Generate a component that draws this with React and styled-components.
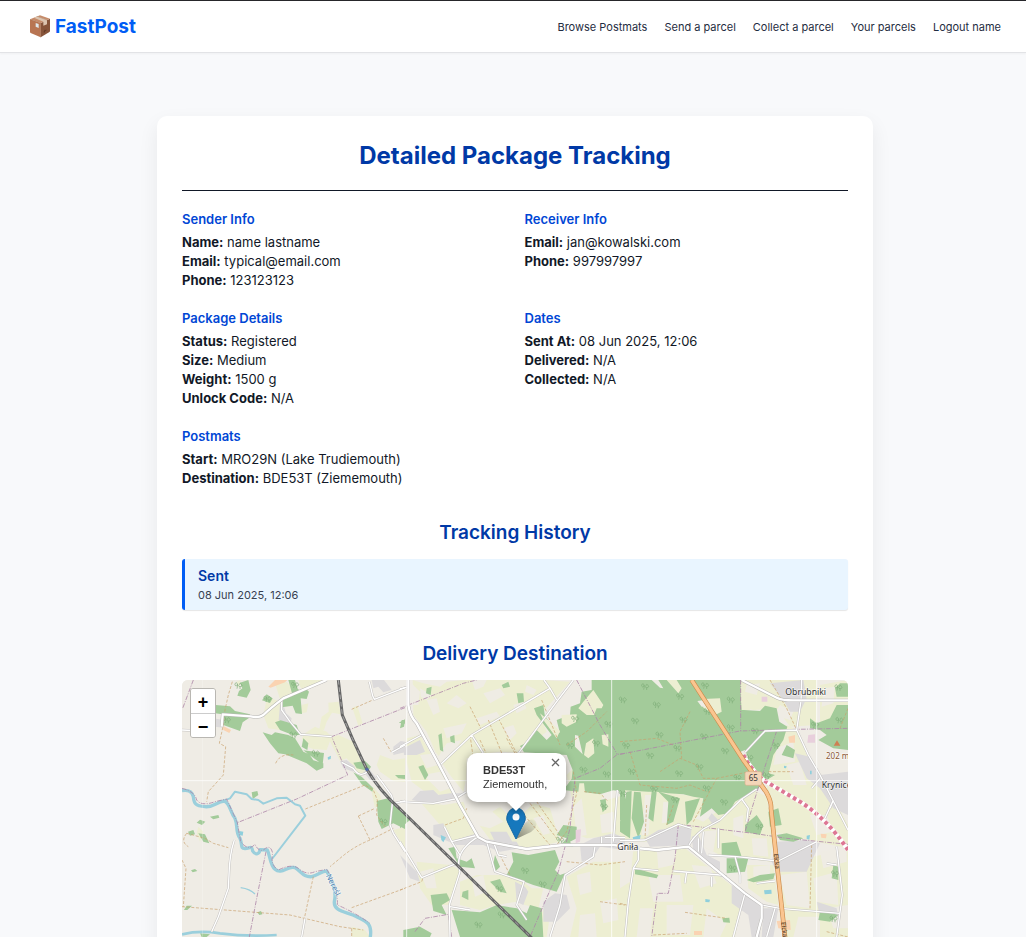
import React from "react";
import styled, { createGlobalStyle } from "styled-components";

const GlobalStyle = createGlobalStyle`
  *, *::before, *::after { box-sizing: border-box; }
  body {
    margin: 0;
    background: #f8f9fb;
    color: #111827;
    font-family: Inter, "Liberation Sans", sans-serif;
    font-size: 13px;
    line-height: 19px;
  }
  h1, h2, h3, p, dl, dt, dd, ul { margin: 0; padding: 0; }
`;

const Header = styled.header`
  display: flex;
  align-items: center;
  justify-content: space-between;
  height: 53px;
  padding: 0 25px 0 29px;
  background: #fff;
  border-top: 1px solid #26262a;
  border-bottom: 1px solid #e2e3e6;
  box-shadow: 0 1px 2px rgba(0, 0, 0, 0.04);
`;

const Brand = styled.a`
  display: flex;
  align-items: center;
  gap: 4px;
  color: #005df5;
  font-size: 19px;
  font-weight: 700;
  line-height: 26px;
  text-decoration: none;
`;

const Nav = styled.nav`
  display: flex;
  gap: 17px;
`;

const NavLink = styled.a`
  color: #1f2d42;
  font-size: 11px;
  line-height: 16px;
  text-decoration: none;
`;

const Main = styled.main`
  padding: 63px 20px 64px 24px;
`;

const Card = styled.article`
  max-width: 716px;
  margin: 0 auto;
  padding: 25px;
  background: #fff;
  border-radius: 10px;
  box-shadow: 0 8px 20px rgba(0, 0, 0, 0.07);
`;

const Title = styled.h1`
  padding-bottom: 19px;
  border-bottom: 1px solid #111827;
  color: #0039a6;
  font-size: 24px;
  font-weight: 700;
  line-height: 30px;
  text-align: center;
`;

const InfoGrid = styled.div`
  display: grid;
  grid-template-columns: 1fr 1fr;
  gap: 19px;
  margin: 19px 0 30px;
`;

const InfoTitle = styled.h3`
  margin-bottom: 4px;
  color: #0046d5;
  font-size: 13px;
  font-weight: 600;
`;

const InfoLine = styled.p`
  strong { font-weight: 700; }
`;

const SectionTitle = styled.h2`
  margin-bottom: 11px;
  color: #0039a6;
  font-size: 19px;
  font-weight: 600;
  line-height: 30px;
  text-align: center;
`;

const History = styled.ul`
  margin-bottom: 29px;
  list-style: none;
`;

const HistoryItem = styled.li`
  padding: 7px 13px 6px;
  background: #e9f5ff;
  border-left: 3px solid #005df5;
  border-radius: 3px;
  box-shadow: 0 1px 1px rgba(0, 0, 0, 0.1);
`;

const EventName = styled.p`
  color: #0039a6;
  font-size: 14px;
  font-weight: 600;
  line-height: 20px;
`;

const EventTime = styled.p`
  color: #374151;
  font-size: 11px;
  line-height: 18px;
`;

const MapFrame = styled.div`
  position: relative;
  height: 320px;
  overflow: hidden;
  border-radius: 6px;
  background: #efede6;
`;

const MapCanvas = styled.svg`
  display: block;
  width: 100%;
  height: 100%;
`;

const ZoomControl = styled.div`
  position: absolute;
  top: 8px;
  left: 8px;
  display: flex;
  flex-direction: column;
  border: 1px solid #b9b7b2;
  border-radius: 3px;
  overflow: hidden;
`;

const ZoomButton = styled.button`
  width: 24px;
  height: 24px;
  padding: 3px 0 0;
  border: 0;
  background: #fff;
  color: #000;
  font-family: "Liberation Sans", sans-serif;
  font-size: 18px;
  font-weight: 700;
  line-height: 21px;
  & + & { border-top: 1px solid #ccc; }
`;

const Popup = styled.div`
  position: absolute;
  left: 50%;
  top: 73px;
  width: 99px;
  padding: 10px 16px 11px;
  transform: translateX(-48px);
  border-radius: 10px;
  background: #fff;
  color: #333;
  font-family: "Liberation Sans", sans-serif;
  font-size: 11px;
  line-height: 14px;
  white-space: nowrap;
  filter: drop-shadow(0 2px 5px rgba(0, 0, 0, 0.4));
  &::after {
    content: "";
    position: absolute;
    top: 100%;
    left: 40px;
    border: 9px solid transparent;
    border-top-color: #fff;
    border-bottom: 0;
  }
`;

const PopupClose = styled.button`
  position: absolute;
  top: 0;
  right: 0;
  width: 19px;
  height: 19px;
  padding: 0;
  border: 0;
  background: none;
  line-height: 0;
`;

const Marker = styled.svg`
  position: absolute;
  left: 50%;
  top: 127px;
  width: 40px;
  height: 33px;
  transform: translateX(-9px);
`;

function BoxIcon() {
  return (
    <svg width="22" height="24" viewBox="0 0 66 72" aria-hidden="true">
      <path d="M3 13 35 24V67L5 54Q3 53 3 50Z" fill="#b87552" />
      <path d="M35 24 63 11V47Q63 50 60 52L35 67Z" fill="#87543a" />
      <path d="M3 13 33 1 63 11 35 24Z" fill="#c68b69" />
      <path d="M15 8 24 4 54 15V28L43 32V20Z" fill="#dcc4b0" />
      <path d="M24 4 54 15" stroke="#b99a84" strokeWidth="2" />
      <path d="M20 24 29 27V39L20 35Z" fill="#dfe7ea" />
      <path d="M44 50 53 45M46 53 48 44" stroke="#593321" strokeWidth="2" />
      <path d="M3 13 35 24V67" fill="none" stroke="#9c6344" strokeWidth="1" />
    </svg>
  );
}

/* The map is drawn in three side-by-side sheets, each with its own origin. */
const SHEETS = [
  {
    x: 0,
    farm: [
      "M262 65 300 80 310 130 300 165 265 160 250 120Z",
      "M285 25 320 20 345 50 300 72Z",
      "M355 15H425L410 30 370 45 360 35Z",
      "M365 90 385 85 380 112 365 115Z",
      "M445 83 476 80 482 118 456 113 440 140 432 165 418 163 425 125 446 110Z",
      "M365 190 375 175 405 155 440 170 455 185 440 225 400 222 380 215Z",
      "M445 190 475 180 520 200 555 290 540 300 500 250 480 258Z",
      "M517 98 532 92 548 145 535 152Z",
      "M600 240 640 255 675 250V320L640 318 600 290 590 270Z",
      "M580 335 600 360 605 375 585 400 575 350Z",
      "M515 755 555 765 570 786H515Z",
      "M640 465 675 455V520Z",
      "M55 455 70 470 60 500 50 475Z",
      "M170 20 182 15 176 40Z",
    ],
    town: [
      "M300 88 312 95 318 115 335 130 330 150 296 135Z",
      "M480 258 500 255 525 275 520 290 490 280Z",
      "M575 15H612L635 45 610 52 595 35 580 40Z",
      "M100 130 130 135 130 158 105 155Z",
      "M640 215 662 198 675 200V232L640 240Z",
      "M550 290 570 285 590 310 570 315Z",
    ],
    peach: ["M265 35 285 15H322L315 22 272 38Z", "M130 153 153 165 148 174 130 165Z"],
    forest: [
      "M180 23 205 15 212 45 200 68 172 62 177 48 187 40Z",
      "M246 76 260 58 278 70 270 84Z",
      "M325 15 345 15 352 40 360 48 366 117 347 115 338 92 305 97 308 75 338 62Z",
      "M358 55 376 40 387 50 380 72 362 70Z",
      "M30 92 107 90 150 94 165 108 210 118 208 128 188 142 180 168 130 150 128 118 30 105Z",
      "M285 142 302 136 350 150 360 180 338 180 300 165Z",
      "M248 172 275 180 285 172 325 180 345 190 370 230 388 238 400 256 430 265 430 278 410 287 380 265 315 238 295 235 270 205Z",
      "M370 226 432 234 428 268 410 256Z",
      "M370 190 385 205 382 225 365 215Z",
      "M590 378 630 368 675 418V462L640 445 605 462 595 440Z",
      "M520 263 555 258 573 275 565 288 530 280Z",
      "M520 292 545 305 580 340 577 350 545 328Z",
      "M90 425 115 420 118 428 100 433Z",
      "M50 443 60 434 76 440 66 450Z",
      "M55 475 75 478 88 505 70 500Z",
      "M24 470 40 465 45 478 30 482Z",
      "M33 586 45 582 52 588 38 592Z",
      "M12 705 20 692 36 692 22 705Z",
      "M232 712 243 708 247 718 238 720Z",
      "M215 352 232 348 235 360 218 372Z",
      "M656 143 675 133V146Z",
      "M645 300 675 300V312L655 310Z",
      "M60 775 90 778 80 786H65Z",
    ],
    thin: [
      "M305 75V105L330 140 362 178 455 185",
      "M675 38 583 73 578 62 568 20",
      "M635 232 675 210",
      "M637 385 630 450 640 475 675 530",
      "M163 495Q148 540 147 600L145 640 115 725 95 770",
      "M375 730 365 786",
      "M6 165 70 168",
      "M485 262 520 280Q540 310 562 290",
      "M590 300 635 362 640 385 675 378",
    ],
    road: ["M440 15 310 70Q270 100 250 120 235 130 212 124L128 118 125 155"],
    track: [
      "M157 20 145 60 135 105 130 150 118 205 137 215 130 300 85 350 80 380",
      "M376 402 555 330 580 345 592 375 590 420 615 455",
      "M535 423 585 400M535 423 570 495 640 460M570 495Q520 515 480 550L450 575",
      "M400 605 372 735",
      "M20 475 75 490 100 505 145 518M20 475Q0 500 25 515",
      "M6 555 18 580 10 695M6 695 200 710 330 720 480 755 550 765",
      "M515 698 675 640M515 103 583 73",
      "M287 265Q300 235 340 240",
      "M610 190 633 230M515 760V786",
    ],
    boundary: [
      "M40 15 8 100",
      "M675 98 455 185 503 300 350 372 172 443",
      "M6 340Q45 350 50 375 65 395 105 380L140 372Q155 405 172 443L182 500Q205 530 225 508 235 530 250 525 272 505 278 535 270 570 295 585 335 565 355 580 380 602 405 590L440 583Q475 640 472 690 520 710 570 745",
      "M258 530 232 660 208 786",
    ],
    trees: [[140, 135], [345, 30], [262, 72], [407, 235], [610, 440], [175, 32], [340, 180]],
  },
  {
    x: 660,
    farm: [
      "M38 15 70 25 120 35 140 20 195 15 430 15 510 20 420 120 440 170 355 235 390 235 300 230 215 240 190 350 150 300 110 240 80 170 40 120Z",
      "M20 190 60 180 95 240 110 270 135 300 160 370 120 360 75 350 35 320 20 260Z",
      "M230 440 300 395 345 440 400 385 450 400 480 500 390 520 275 500Z",
      "M50 560 150 570 180 585 150 690 95 690 60 640Z",
      "M310 600 370 620 395 640 430 640 415 700 375 690 350 680 290 690 240 705 180 690 180 620 230 600Z",
      "M500 605 580 560 675 560V786H510L530 700Z",
      "M500 300 520 280 550 300 580 320 560 350 610 360 600 380 675 360V480L560 490 510 470 520 390Z",
      "M60 380 130 390 190 380 230 480 160 500 120 450Z",
      "M430 700 450 720 440 786H410Z",
    ],
    pale: [
      "M80 75 110 70 120 110 100 120Z",
      "M60 40 95 60 80 75 62 65Z",
      "M140 85 170 60 200 85 175 100Z",
      "M215 15 260 15 250 35 225 45Z",
      "M250 55 300 40 315 60 270 85Z",
      "M340 90 370 80 380 100 350 115Z",
      "M380 30 410 45 400 60 375 50Z",
      "M130 160 200 145 185 175 140 190Z",
      "M60 240 110 235 130 265 80 280Z",
      "M230 130 290 110 300 125 240 150Z",
      "M310 160 340 150 350 175 330 195Z",
      "M140 205 185 195 160 235 125 262 115 245Z",
      "M70 300 120 290 150 340 120 350Z",
      "M200 250 240 240 330 395 270 400 215 440 195 400Z",
      "M520 395 545 370 560 480 530 485Z",
      "M220 395 250 385 310 440 270 460 230 450Z",
      "M530 600 570 590 575 650 540 660Z",
      "M600 680 650 670 655 735 610 745Z",
      "M540 720 585 715 590 786H535Z",
      "M400 430 430 420 450 475 430 480Z",
      "M60 590 100 580 110 640 80 640Z",
      "M215 610 250 600 260 650 225 665Z",
      "M345 410 365 400 385 440 365 455Z",
      "M600 420 640 410 640 470 605 475Z",
      "M500 520 540 515 520 560 490 590Z",
      "M30 20 60 50 55 90 35 90Z",
    ],
    town: [
      "M10 220 60 195 75 230 50 240 12 240Z",
      "M35 375 60 348 100 345 115 360 150 355 195 355 165 372 105 385 60 380Z",
      "M100 450 130 445 150 500 230 475 250 492 350 500 360 520 300 530 250 510 170 510 100 480Z",
      "M270 470 320 470 345 515 290 510Z",
      "M540 510 580 490 640 475 675 490V525L600 515 580 545 545 560Z",
      "M430 680 465 655 500 660 510 700 470 740 430 740Z",
      "M345 620 375 635 385 650 370 690 350 680Z",
      "M0 540 50 590 60 620 30 610Z",
    ],
    forest: [
      "M575 15H675V350L640 346 600 358 555 352 552 325 538 325 535 350 490 345 515 312 518 285 500 240 372 232 360 213 385 200 410 165 440 195 455 180 410 120 402 100 430 90 435 125 480 175 470 135 510 120 512 95 540 85 545 50 575 45Z",
      "M600 375 617 372 620 400 608 412Z",
      "M660 340 675 335V440L660 435Z",
      "M335 532 385 540 465 525 478 560 465 585 480 600 495 595 470 650 400 630 320 600 340 560Z",
      "M285 540 300 575 285 590 278 575Z",
      "M470 480 490 450 530 455 530 490 510 500 520 515 480 512 500 490Z",
      "M145 520 165 515 170 550 200 560 215 550 225 580 180 575Z",
      "M270 620 300 612 320 655 300 650Z",
      "M92 660 140 655 150 675 125 690 140 720 100 708Z",
      "M155 705 240 712 290 690 350 700 380 715 390 690 425 700 430 786H180Z",
      "M10 765 60 755 95 775 90 786H10Z",
      "M188 650 205 645 205 675 185 665Z",
      "M0 405 30 435 0 460Z",
      "M80 40 95 35 92 60 78 55Z",
      "M5 135 15 135 12 155 0 160Z",
      "M350 55 370 55 372 80 355 85Z",
      "M115 180 125 175 130 230 120 225Z",
      "M55 275 70 270 85 300 75 315Z",
      "M150 185 163 180 165 205 152 200Z",
      "M305 30 325 20 330 35 310 40Z",
      "M215 250 240 240 220 270Z",
    ],
    cut: [
      "M550 80 580 45 610 90 605 100 590 100 582 120 560 120 535 100Z",
      "M558 205 580 190 583 235 565 250 552 240Z",
      "M485 120 530 118 530 140 500 155 485 145Z",
      "M605 180 625 178 625 215 608 208Z",
      "M420 115 455 145 480 168 470 190 430 135Z",
    ],
    bare: ["M525 180 535 182 548 238 525 215Z"],
    pink: ["M527 465 543 463 540 500 527 505Z"],
    thin: [
      "M0 42 28 35M0 215 65 180",
      "M120 270 215 180 450 40 470 75M432 15 450 40",
      "M520 15 470 80 355 235",
      "M215 180 250 235",
      "M0 380 100 385 165 372 200 350",
      "M65 608 170 565 M235 485Q160 530 180 590L148 690 150 786",
      "M0 500 65 608",
      "M133 455 155 500 235 480M155 500 180 540",
      "M260 500 285 590 372 620 350 690 380 735",
      "M280 500 295 540 320 545",
      "M150 695 210 705",
      "M585 515 580 545 495 600 480 690 450 786",
      "M652 345 640 500M605 485V510M615 488H675",
    ],
    road: ["M25 15V90Q30 125 50 145L115 265 180 390 235 487 260 500 380 522 490 510 640 510 675 515"],
    track: [
      "M210 95 245 165M265 135 360 370M295 130 350 235M320 190 345 235",
      "M240 195 330 390M355 400 450 510M390 385 470 490M410 380 490 495M425 75 480 210",
      "M135 450 190 430 200 400M0 645 65 620 70 605",
      "M210 180 220 250 250 300",
      "M300 540 330 600M500 560 600 570 675 560M600 680 675 690",
      "M500 210 560 170 620 110M520 290 530 355 500 470 470 510",
      "M552 350 600 355 625 380",
    ],
    boundary: [
      "M0 100 190 25 230 15",
      "M530 15 600 150 652 238M675 235 652 238 600 280 525 310 510 460 475 590 435 680 390 786",
      "M45 770 75 730 145 718 155 786",
    ],
    trees: [[525, 132], [625, 148], [510, 212], [588, 205], [550, 285], [620, 298], [375, 587], [428, 628], [235, 750], [298, 642], [612, 395], [305, 720], [480, 495]],
  },
  {
    x: 1320,
    farm: [
      "M360 15H590V150L510 155 470 100 400 105 362 95Z",
      "M455 220 500 150 530 165 560 240 620 330 684 450V520L590 500 460 470 440 350Z",
      "M0 345 110 345 250 370 260 400 225 430 250 440 290 410 400 345 440 365 460 480 450 560 300 540 220 500 70 500 0 490Z",
      "M20 530 195 520 370 660 345 786H0V600Z",
      "M480 570 684 520V786H500Z",
      "M600 30 684 15V150L600 150Z",
      "M380 570 460 570 475 690 440 680 385 640Z",
    ],
    pale: [
      "M0 520 40 525 30 620 0 640Z",
      "M85 600 180 600 190 680 100 680Z",
      "M480 600 560 590 570 700 500 690Z",
      "M240 470 290 465 280 530 240 510Z",
      "M580 610 650 590 655 690 590 680Z",
      "M470 220 520 200 525 260 460 270Z",
      "M140 690 220 690 210 780 140 780Z",
      "M535 725 600 725 600 786H520Z",
      "M460 120 480 90 520 110 510 135Z",
      "M395 490 440 490 445 545 400 540Z",
      "M600 530 680 520 680 560 610 580Z",
      "M500 270 540 260 560 330 520 330Z",
      "M570 420 620 420 640 470 590 480Z",
      "M15 350 35 350 28 430 10 440Z",
      "M75 360 95 360 85 480 65 480Z",
      "M130 380 165 385 150 440 125 445Z",
      "M110 520 170 525 160 570 115 580Z",
      "M215 570 270 575 290 625 240 640Z",
      "M60 700 100 700 90 786H50Z",
      "M260 700 320 745 300 786H250Z",
      "M400 575 450 570 450 600 400 605Z",
      "M620 700 684 690V760L640 760Z",
      "M380 30 420 25 410 60 375 50Z",
      "M340 430 370 420 370 490 340 480Z",
      "M610 40 645 35 640 85 605 95Z",
    ],
    town: [
      "M450 25 550 15 560 70 540 110 510 110 490 75Z",
      "M525 235 570 245 600 300 684 290V420L640 400 600 340 560 310Z",
      "M75 490 115 465 175 455 215 460 210 510 90 515Z",
      "M470 500 560 495 600 505 560 590 470 590 455 560Z",
      "M335 630 425 690 420 786H395L385 720 335 685Z",
      "M430 700 475 700 460 786H425Z",
      "M275 415 300 440 280 450 265 430Z",
      "M215 485 235 480 260 540 300 560 300 590 260 560 220 530Z",
      "M590 680 650 700 655 725 600 725Z",
      "M380 280 410 300 410 320 380 300Z",
    ],
    peach: ["M505 185 525 180 525 203 508 203Z", "M470 738 510 735 512 765 475 760Z", "M602 476 620 478 618 490 604 488Z", "M222 768 246 768 246 780 222 780Z"],
    forest: [
      "M0 15H362V60L372 105 420 108 435 92 470 100 478 140 502 155 490 195 460 240 445 300 415 340 345 380 325 415 295 420 275 400 240 425 250 370 220 365 190 358 145 355 110 350 85 350 0 345Z",
      "M20 350 35 348 30 490 0 470 0 440Z",
      "M42 350 62 352 72 440 55 490 35 430Z",
      "M95 350 110 352 100 440 85 430Z",
      "M115 350 180 370 160 440 140 450 145 380Z",
      "M195 380 240 370 215 435 200 450Z",
      "M375 450 410 420 430 450 420 480 375 470Z",
      "M445 410 475 400 485 450 450 455Z",
      "M305 505 350 500 365 545 305 545Z",
      "M320 550 385 550 375 590 320 595Z",
      "M485 240 500 210 525 225 520 250Z",
      "M570 130 590 145 630 130 650 90 684 90V225L640 220 595 195 620 180 600 165 570 160Z",
      "M645 40 660 25 684 25V65H650Z",
      "M600 710 635 715 655 720 630 740 595 735Z",
      "M640 570 655 575 655 615 635 610Z",
      "M380 615 420 600 465 595 460 612 400 622Z",
      "M45 580 115 600 110 610 45 598Z",
      "M307 730 328 728 330 743 310 742Z",
      "M470 480 500 475 550 490 520 500 480 495Z",
      "M430 290 465 300 440 315Z",
    ],
    cut: [
      "M140 15 170 15 185 40 175 55Z",
      "M250 72 300 70 305 110 285 120 250 98Z",
      "M362 65 380 60 390 105 365 105Z",
    ],
    bare: ["M95 15 115 15 130 40 120 38Z", "M232 78 255 75 262 95 245 95Z", "M350 235 375 225 385 250 365 255Z"],
    pink: ["M425 65 442 65 442 80 425 80Z", "M565 180 585 178 585 203 562 203Z"],
    thin: [
      "M545 15 543 78 530 165 565 240 600 300 684 465M600 310 575 340M640 375 630 400M640 375 615 430",
      "M530 165 435 168 375 232",
      "M0 497 75 495 175 448 215 460",
      "M205 515Q215 490 250 462L300 435 365 372 410 342M365 372 385 400 380 440",
      "M265 540 350 545 475 558 590 500",
      "M345 545 360 600V625M160 588 300 600M200 590 195 625M300 600 320 605M275 605V635",
      "M55 525V555L40 580 25 680 15 786M40 580 115 587",
      "M375 655 360 710 340 786M465 700 440 786",
      "M425 690 480 700 660 715M650 515 667 660 650 786M620 565 650 570",
      "M250 470 245 535M295 460V520M235 490V530",
      "M410 625 465 618",
    ],
    road: ["M365 15 470 68Q485 76 520 76H684", "M60 520 110 525 205 515 375 655 425 690V730L410 786"],
    track: [
      "M30 230 60 330 170 340 210 330 260 350M120 290 180 250 230 270 250 310 290 310 390 290",
      "M210 110 180 170 185 250M0 200 110 190 160 210",
      "M450 15 500 100 530 165M445 290 520 290",
      "M290 310 220 440M0 685 20 690M195 712 320 730",
      "M575 510 570 700M100 780 200 775M620 770 684 786",
      "M80 390 75 490M160 390 140 450",
      "M684 100 660 160",
    ],
    boundary: [
      "M0 238 360 168 530 163 684 160M362 15V168M470 168 430 290 405 370 375 470",
      "M175 448 165 550 145 655 112 655 95 786M175 448 400 475 500 490 684 508",
    ],
    trees: [[75, 35], [8, 75], [110, 90], [180, 65], [255, 32], [332, 75], [262, 110], [45, 138], [190, 135], [332, 158], [405, 168], [118, 180], [252, 185], [18, 212], [172, 220], [90, 242], [315, 228], [388, 248], [35, 290], [177, 296], [238, 276], [352, 308], [8, 356], [102, 342], [165, 375], [260, 340], [312, 382], [468, 212], [585, 150], [658, 136], [655, 38], [440, 302], [418, 455], [338, 580], [645, 596], [640, 732]],
  },
];

const AREA_COLOURS = [
  ["farm", "#edeed2"],
  ["pale", "#efece4"],
  ["town", "#dcdadb"],
  ["peach", "#fad3b2"],
  ["forest", "#a3cb9a"],
  ["cut", "#edeed2"],
  ["bare", "#efece4"],
  ["pink", "#e8cfdc"],
];

const POOLS = ["M443 247 453 242 452 252 444 254Z", "M178 468 190 470 188 482 178 480Z", "M782 480 798 487 790 502 784 495Z", "M1358 487 1382 480 1380 494 1360 495Z", "M1752 646 1774 644 1775 656 1754 658Z", "M1880 482 1890 480 1888 494 1880 492Z", "M1576 672 1590 674 1588 682 1576 681Z", "M1812 272 1820 274 1818 280 1812 279Z", "M1890 287 1895 287 1895 298 1890 298Z"];

function Layer({ kind, ...stroke }) {
  return (
    <g fill="none" strokeLinejoin="round" {...stroke}>
      {SHEETS.map((s) => (
        <path key={s.x} transform={`translate(${s.x} 0)`} d={(s[kind] || []).join("")} />
      ))}
    </g>
  );
}

const RIVER =
  "M6 347C20 345 35 345 40 365C42 385 45 393 75 395C100 398 110 380 133 378C150 385 150 410 165 430C175 455 165 470 180 490C188 510 180 520 195 521C210 520 215 510 218 528C225 540 238 540 240 524L262 525C270 540 270 570 285 583C305 600 325 570 345 578C365 590 370 607 395 605C415 600 425 588 440 588C460 620 470 650 463 680C460 710 500 710 530 725C560 740 577 745 571 786V990";
const RAIL = "M475 15 487 120Q520 200 560 282 600 350 660 402L1048 782 1240 975";
const HIGHWAY = "M1535 15 1690 255 1758 350Q1775 380 1773 400L1790 560 1815 786 1830 980";
const BYPASS = "M1690 240Q1710 280 1750 315L1860 380Q1940 430 2004 525";

function AreaMap() {
  return (
    <MapCanvas viewBox="6 15 1998 960" preserveAspectRatio="xMidYMid slice" role="img" aria-label="Map of the delivery destination">
      <defs>
        <g id="tree" fill="none" stroke="#7fae78" strokeWidth="2">
          <path d="M-4 9C-2 2-1-8-6-9-12-8-11 0-7 1-4 1-2-3-3-5M5 10V3M5 3C0 3 0-1 3-3 2-8 8-8 9-4 13-1 11 3 5 3" />
        </g>
      </defs>
      <rect x="0" y="0" width="2010" height="990" fill="#efece5" />
      {AREA_COLOURS.map(([kind, colour]) => (
        <Layer key={kind} kind={kind} fill={colour} />
      ))}
      <path d={POOLS.join("")} fill="#8fcfdc" />
      {SHEETS.map((s) => s.trees.map(([x, y]) => <use key={`${s.x}-${x}-${y}`} href="#tree" x={s.x + x} y={y} />))}
      <g fill="none" stroke="#9bcfdc" strokeLinejoin="round">
        <path d={RIVER} strokeWidth="10" />
        <path d="M133 376 150 370 165 350 200 358 215 372 235 375 250 386 290 370 320 368 345 388 360 392 376 422 276 552" strokeWidth="6" />
        <path d="M6 778Q60 765 120 775 200 785 290 780" strokeWidth="8" />
        <path d="M182 638Q210 642 225 657" strokeWidth="4" />
      </g>
      <Layer kind="track" stroke="#c9a06c" strokeWidth="2" strokeDasharray="9 5" />
      <Layer kind="boundary" stroke="#ad85a8" strokeWidth="3" strokeDasharray="14 4 3 4" opacity="0.8" />
      <Layer kind="thin" stroke="#c4c2c0" strokeWidth="7" />
      <Layer kind="thin" stroke="#fff" strokeWidth="4" />
      <Layer kind="road" stroke="#b9b7b5" strokeWidth="10" />
      <Layer kind="road" stroke="#fff" strokeWidth="7" />
      <path d={RAIL} fill="none" stroke="#666" strokeWidth="9" />
      <path d={RAIL} fill="none" stroke="#c9c9c9" strokeWidth="2" strokeDasharray="14 8" />
      <circle cx="561" cy="283" r="5" fill="#5269a5" />
      <g fill="none">
        <path d={BYPASS} stroke="#fff" strokeWidth="13" />
        <path d={BYPASS} stroke="#dd7794" strokeWidth="12" strokeDasharray="11 9" />
        <path d={HIGHWAY} stroke="#ca8c4c" strokeWidth="14" />
        <path d={HIGHWAY} stroke="#fac58f" strokeWidth="10" />
      </g>
      <path d="M0 317H2010M680 0V990M1295 0V990M1910 0V990" stroke="#fff" strokeWidth="3" opacity="0.75" />
      <path d="M67 0V990" stroke="#fff" strokeWidth="2" opacity="0.4" />
      <rect x="1695" y="290" width="50" height="41" rx="5" fill="#f4d5b8" stroke="#d9b18d" strokeWidth="2" />
      <path d="M1961 212 1971 196 1981 212Z" fill="#cf7f52" />
      <g fontFamily='"Noto Sans", sans-serif' fontSize="26" fill="#333" stroke="#fff" strokeWidth="4" strokeOpacity="0.6" paintOrder="stroke">
        <text x="1816" y="60">Obrubniki</text>
        <text x="1312" y="526">Gniła</text>
        <text x="1925" y="338">Krynice</text>
        <text x="1938" y="251" fill="#8b5836" fontSize="24">202 m</text>
        <text x="1706" y="319" strokeWidth="0" fontSize="24">65</text>
        <text transform="translate(1781 537) rotate(84)" fontSize="19" strokeWidth="0" fill="#3d2b1b">Ełcka</text>
        <text transform="translate(1804 742) rotate(84)" fontSize="19" strokeWidth="0" fill="#3d2b1b">Ełcka</text>
        <text transform="translate(437 602) rotate(63)" fontSize="23" fill="#4a80b0">Nereśl</text>
      </g>
    </MapCanvas>
  );
}

const NAV = ["Browse Postmats", "Send a parcel", "Collect a parcel", "Your parcels", "Logout name"];

const INFO = [
  ["Sender Info", [["Name", "name lastname"], ["Email", "typical@email.com"], ["Phone", "123123123"]]],
  ["Receiver Info", [["Email", "jan@kowalski.com"], ["Phone", "997997997"]]],
  ["Package Details", [["Status", "Registered"], ["Size", "Medium"], ["Weight", "1500 g"], ["Unlock Code", "N/A"]]],
  ["Dates", [["Sent At", "08 Jun 2025, 12:06"], ["Delivered", "N/A"], ["Collected", "N/A"]]],
  ["Postmats", [["Start", "MRO29N (Lake Trudiemouth)"], ["Destination", "BDE53T (Ziememouth)"]]],
];

export default function App() {
  return (
    <>
      <GlobalStyle />
      <Header>
        <Brand href="#">
          <BoxIcon />
          FastPost
        </Brand>
        <Nav>
          {NAV.map((label) => (
            <NavLink key={label} href="#">{label}</NavLink>
          ))}
        </Nav>
      </Header>
      <Main>
        <Card>
          <Title>Detailed Package Tracking</Title>
          <InfoGrid>
            {INFO.map(([title, lines]) => (
              <section key={title}>
                <InfoTitle>{title}</InfoTitle>
                {lines.map(([name, value]) => (
                  <InfoLine key={name}>
                    <strong>{name}:</strong> {value}
                  </InfoLine>
                ))}
              </section>
            ))}
          </InfoGrid>
          <SectionTitle>Tracking History</SectionTitle>
          <History>
            <HistoryItem>
              <EventName>Sent</EventName>
              <EventTime>08 Jun 2025, 12:06</EventTime>
            </HistoryItem>
          </History>
          <SectionTitle>Delivery Destination</SectionTitle>
          <MapFrame>
            <AreaMap />
            <Marker viewBox="0 0 40 33" aria-hidden="true">
              <defs>
                <linearGradient id="shade" x1="0" y1="1" x2="1" y2="0">
                  <stop offset="0" stopColor="#000" stopOpacity="0.45" />
                  <stop offset="1" stopColor="#000" stopOpacity="0" />
                </linearGradient>
              </defs>
              <path d="M10 32 19 16Q25 10 30 14 32 20 25 25Z" fill="url(#shade)" />
              <path d="M10 32 2 16Q0 13 1 9 3 1 10 1T19 9Q20 13 18 16Z" fill="#1678bd" stroke="#1468a4" />
              <circle cx="10" cy="10" r="3.5" fill="#fff" />
            </Marker>
            <Popup>
              <strong>BDE53T</strong>
              <br />
              Ziememouth,
              <PopupClose type="button" aria-label="Close popup">
                <svg width="19" height="19" viewBox="0 0 19 19">
                  <path d="M5 6 12 13M12 6 5 13" stroke="#666" strokeWidth="1.3" />
                </svg>
              </PopupClose>
            </Popup>
            <ZoomControl>
              <ZoomButton type="button" aria-label="Zoom in">+</ZoomButton>
              <ZoomButton type="button" aria-label="Zoom out">−</ZoomButton>
            </ZoomControl>
          </MapFrame>
        </Card>
      </Main>
    </>
  );
}
